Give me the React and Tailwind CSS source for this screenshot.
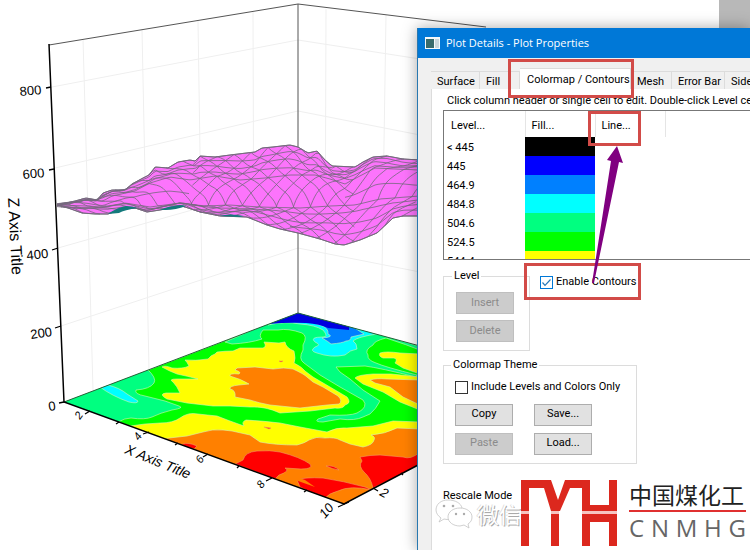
import { useState } from "react";
import clsx from "clsx";

const tabs = [
  { name: "Surface", width: "w-[49px]" },
  { name: "Fill", width: "w-10" },
  { name: "Colormap / Contours", width: "w-[111px]" },
  { name: "Mesh", width: "w-[41px]" },
  { name: "Error Bar", width: "w-[53px]" },
  { name: "Side Walls", width: "w-16" },
];

const levels = [
  { label: "< 445", color: "bg-black" },
  { label: "445", color: "bg-[#0000ff]" },
  { label: "464.9", color: "bg-[#0080ff]" },
  { label: "484.8", color: "bg-[#00ffff]" },
  { label: "504.6", color: "bg-[#00ff80]" },
  { label: "524.5", color: "bg-[#00ff00]" },
  { label: "544.4", color: "bg-[#ffff00]" },
];

// Surface profile, from the far edge down to the near edge
const profiles = [
  [[57, 205], [75, 201], [86, 198], [97, 200], [103, 193], [112, 190], [125, 190], [132, 184], [143, 178], [149, 175], [155, 167], [168, 168], [178, 162], [190, 160], [195, 161], [200, 156], [215, 157], [230, 155], [255, 152], [262, 148], [273, 147], [290, 145], [298, 147], [308, 153], [317, 151], [325, 160], [332, 166], [355, 167], [363, 162], [373, 157], [387, 156], [403, 159], [420, 160]],
  [[57, 205], [86, 200], [103, 201], [112, 196], [135, 191], [150, 183], [170, 177], [190, 180], [215, 176], [240, 180], [265, 178], [290, 175], [315, 175], [330, 179], [345, 184], [358, 177], [375, 168], [395, 169], [420, 170]],
  [[57, 205], [86, 206], [103, 207], [125, 203], [150, 207], [180, 203], [205, 206], [230, 205], [260, 207], [300, 208], [330, 206], [355, 205], [380, 199], [420, 196]],
  [[57, 205], [68, 208], [82, 213], [95, 214], [108, 214], [122, 209], [135, 208], [147, 212], [160, 210], [182, 206], [200, 212], [220, 216], [247, 217], [267, 225], [280, 229], [298, 233], [320, 239], [335, 244], [344, 245], [360, 240], [377, 233], [393, 218], [403, 216], [420, 216]],
];

const heightAt = (points, x) => {
  for (let i = 1; i < points.length; i++) {
    if (x <= points[i][0]) {
      const [x0, y0] = points[i - 1];
      const [x1, y1] = points[i];
      return y0 + ((x - x0) / (x1 - x0)) * (y1 - y0);
    }
  }
  return points[points.length - 1][1];
};

// depth runs from 0 (far edge) to 3 (near edge)
const surfaceAt = (x, depth) => {
  const band = Math.min(2, Math.floor(depth));
  const top = heightAt(profiles[band], x);
  const bottom = heightAt(profiles[band + 1], x);
  const part = depth - band;
  const wave = 1.6 * Math.sin(x / 13 + depth * 4) * Math.sin(part * Math.PI);
  return top + part * (bottom - top) + wave;
};

const toPath = (points) => "M" + points.map((p) => p[0].toFixed(1) + " " + p[1].toFixed(1)).join("L");

const driftAt = (depth) => {
  if (depth < 1) return depth * 34;
  if (depth < 2) return 34 + (depth - 1) * 26 + 4 * Math.sin((depth - 1) * Math.PI);
  return 60 + (depth - 2) * 44;
};

const meshLines = () => {
  const lines = [];
  const rows = [
    { depth: 0, from: 57 },
    { depth: 0.25, from: 57 },
    { depth: 0.5, from: 100 },
    { depth: 0.75, from: 57 },
    { depth: 1, from: 57 },
    { depth: 1.5, from: 57, to: 190 },
    { depth: 1.55, from: 345 },
    { depth: 2, from: 57 },
    { depth: 2.2, from: 57 },
    { depth: 2.5, from: 57 },
    { depth: 2.75, from: 290 },
    { depth: 3, from: 57 },
  ];
  rows.forEach(({ depth, from, to = 420 }) => {
    const row = [];
    for (let x = from; x <= to; x += 3) row.push([x, surfaceAt(x, depth)]);
    lines.push(toPath(row));
  });
  for (let start = -106; start < 540; start += 17) {
    const right = [];
    const left = [];
    for (let depth = 0; depth <= 3.01; depth += 0.1) {
      const d = Math.min(3, depth);
      const xr = start + driftAt(d);
      const xl = start - driftAt(d);
      if (xr >= 57 && xr <= 355) right.push([xr, surfaceAt(xr, d)]);
      if (xl >= 190 && xl <= 420) left.push([xl, surfaceAt(xl, d)]);
    }
    if (right.length > 1) lines.push(toPath(right));
    if (left.length > 1) lines.push(toPath(left));
  }
  return lines.join("");
};

const surfaceOutline = toPath([...profiles[0], ...[...profiles[3]].reverse()]) + "Z";
const surfaceMesh = meshLines();

const Surface = () => (
  <g>
    <path d={surfaceOutline} fill="#fc74fc" stroke="#75707c" strokeWidth="1" strokeLinejoin="round" />
    <path d={surfaceMesh} fill="none" stroke="#75687e" strokeWidth="0.8" />
    <path d="M108 214Q118 207 126 206Q132 206 138 208Q124 210 119 213ZM160 210Q169 206 174 206Q180 204 186 206Q176 210 165 210ZM219 216Q230 213 244 216L240 217Z" fill="#147a7c" />
  </g>
);

const Floor = () => (
  <g clipPath="url(#floor)" stroke="#d5f5b8" strokeWidth="0.6" strokeLinejoin="round">
    <path d="M64 402L298 313L420 346V464L344 504Z" fill="#00ff00" />
    {/* 504.6 */}
    <g fill="#00ff80">
      <path d="M60 402L147 369Q157 378 154 383Q150 389 136 390Q134 394 145 396L165 401L179 406Q185 408 172 410Q160 413 152 417Q145 420 131 418Q125 418 118 422L100 420Z" />
      <path d="M225 342L298 310L425 348V352Q405 344 386 338Q374 341 373 345Q364 350 368 355Q367 360 376 363Q385 367 417 375L416 377Q380 368 365 366L336 367L340 372L350 379L363 390L380 401Q376 409 370 414L363 417Q355 421 340 419L323 422Q314 422 318 419L330 415Q350 416 357 413Q369 407 363 400L340 387L320 375L304 363Q298 359 303 350L303 345Q308 336 302 333Q288 328 278 330L263 330Q258 336 262 339Q250 343 232 344Z" />
    </g>
    {/* 484.8 */}
    <g fill="#00ffff">
      <path d="M100 387L108 385Q120 388 127 394L138 401Q138 404 129 402Q112 396 100 387Z" />
      <path d="M268 325Q285 321 300 324Q315 325 323 330Q329 337 323 337Q309 337 315 342Q322 345 315 347Q309 351 317 353Q331 358 345 355Q350 350 357 349Q357 343 353 341Q357 337 377 334L350 323L298 310Z" />
    </g>
    {/* 464.9 */}
    <path d="M298 318L320 325Q329 328 328 334Q335 337 322 338Q329 342 331 344Q343 343 346 341Q351 341 351 337L364 334L347 323Z" fill="#0080ff" />
    {/* 445 */}
    <path d="M298 310L268 324Q290 322 306 323Q320 324 328 328L349 330V322Z" fill="#0000e0" stroke="none" />
    {/* 544.4 */}
    <g fill="#ffff00">
      <path d="M162 367Q165 365 172 368Q183 369 189 366Q187 362 185 360Q195 361 208 359Q211 355 215 354L217 352Q225 351 233 351L240 348L263 348Q267 347 264 342L279 343L285 342Q286 348 294 351Q296 359 294 363Q302 367 305 371L313 377L330 387L347 397Q352 403 345 405Q343 409 335 408L310 411L280 413Q265 406 250 407L230 406L213 406L187 403L167 399Q158 394 166 393L180 393Q177 386 173 382Q168 379 177 379L198 379Q187 376 177 374Q169 371 162 367Z" />
      <path d="M380 353Q386 351 400 353L420 354V374L403 368L395 363Q398 359 394 358L383 358Q378 356 380 353Z" />
      <path d="M355 378Q357 375 373 374L391 374L420 377V410L400 402L383 392L363 384Z" />
      <path d="M130 426L145 424L160 423Q173 423 180 418Q188 412 198 414Q207 415 217 416L230 421L244 426Q241 422 246 420Q263 421 280 423L300 427L327 432Q337 427 347 428L373 426L393 421L420 422V505H130Z" />
    </g>
    {/* 564.2 */}
    <g fill="#ff8000">
      <path d="M237 368L255 367L273 369Q284 367 293 369Q304 374 307 377L313 382L323 387L338 396Q343 401 339 404L327 405L300 408L270 405Q259 403 250 400L235 397Q236 390 230 389Q229 386 239 385L249 384Q241 379 230 376Q229 373 239 374Q242 372 235 370Z" />
      <path d="M370 380Q376 378 387 379L420 380V405L403 397L390 387L375 383Z" />
      <path d="M160 439L187 436L203 432Q212 429 223 430L232 431L250 435L260 442Q275 445 297 445Q305 443 309 440Q316 436 325 438Q335 437 340 440L350 444L363 447Q373 445 374 440Q376 437 371 435Q385 434 397 428L420 429V470L344 510L160 445Z" />
    </g>
    {/* above 584 */}
    <g fill="#ff0000" stroke="#f0a060">
      <path d="M243 460Q245 452 257 451Q270 450 280 452Q300 457 310 464Q314 469 301 469L285 468Q291 471 279 475L275 479L235 464Z" />
      <path d="M297 480Q304 477 323 478Q343 481 365 487L372 490Q350 485 338 491Q329 493 324 499L300 487Z" />
      <path d="M360 457Q370 455 380 455L403 457Q411 460 420 452V465L373 488Q371 478 364 472Q358 466 362 461Z" />
      <path d="M326 466Q334 465 339 470Q332 469 326 466ZM183 444Q188 442 197 446L194 449L180 446ZM264 427L271 428L269 429ZM279 361L283 361L281 362Z" />
    </g>
    <path d="M284 472L305 480L315 487L284 476Z" fill="#ff8000" stroke="none" />
  </g>
);

const PlotView = () => (
  <svg
    viewBox="0 0 500 550"
    className="absolute left-0 top-0 w-[500px]"
    role="img"
    aria-label="3D surface with contour projection"
  >
    <defs>
      <clipPath id="floor">
        <path d="M64 402L298 313L420 346V464L344 504Z" />
      </clipPath>
    </defs>
    <g stroke="#efefef" strokeWidth="1" fill="none">
      <path d="M83 39L93 390M142 30L149 370M198 21L203 348M253 12L254 330M326 9L325 320M386 15L381 336" />
      <path d="M52 87L298 40L420 59M55 168L298 111L420 135M58 248L298 180L420 203M61 326L298 248L420 272" />
    </g>
    <path d="M49 45L298 4L486 27M298 4V313" fill="none" stroke="#555" strokeWidth="1" />
    <Floor />
    <path d="M64 402L298 313L420 346" fill="none" stroke="#266039" strokeWidth="1" />
    <Surface />
    <path d="M49 44L64 402L344 504L420 464" fill="none" stroke="#000" strokeWidth="1.5" />
    <path
      d="M46 88L51 87M49 170L54 169M52 250L58 248M55 328L61 326M59 403L64 402M90 411L85 414M119 422L116 424M149 432L143 434M178 443L175 445M208 454L203 457M239 466L237 468M272 478L266 481M307 490L304 492M349 502L338 507M373 488L378 491M401 473L403 475"
      stroke="#000"
      strokeWidth="1.3"
    />
    <g className="fill-black font-['Liberation_Sans',sans-serif] text-[13px]">
      <text transform="translate(20 96) rotate(-5)">800</text>
      <text transform="translate(23 179) rotate(-5)">600</text>
      <text transform="translate(27 260) rotate(-6)">400</text>
      <text transform="translate(31 339) rotate(-8)">200</text>
      <text transform="translate(49 411) rotate(-8)">0</text>
      <text transform="translate(8 198) rotate(87)" className="text-[16px]">Z Axis Title</text>
      <text transform="translate(124 453) rotate(22)" className="text-[14px] italic">X Axis Title</text>
      <g className="text-[11px] italic">
        <text transform="translate(80 420) rotate(-55)">2</text>
        <text transform="translate(139 441) rotate(-55)">4</text>
        <text transform="translate(201 464) rotate(-55)">6</text>
        <text transform="translate(262 489) rotate(-55)">8</text>
        <text transform="translate(325 519) rotate(-50)" className="text-[13px]">10</text>
        <text transform="translate(379 495) rotate(28)" className="text-[13px]">2</text>
      </g>
    </g>
  </svg>
);

const DialogButton = ({ children, disabled }) => (
  <button
    type="button"
    disabled={disabled}
    className={clsx(
      "h-[22px] w-[58px] border",
      disabled ? "border-[#bfbfbf] bg-[#cccccc] text-[#8b8b8b]" : "border-[#adadad] bg-[#e1e1e1]"
    )}
  >
    {children}
  </button>
);

const CheckBox = ({ label, checked, onChange, blue }) => (
  <label className="flex items-center gap-[3px] whitespace-nowrap">
    <span className="grid">
      <input
        type="checkbox"
        checked={checked}
        onChange={onChange}
        className={clsx(
          "col-start-1 row-start-1 size-[13px] appearance-none border bg-white",
          blue ? "border-[#0078d7]" : "border-[#333]"
        )}
      />
      {checked && (
        <svg viewBox="0 0 13 13" className="pointer-events-none col-start-1 row-start-1 size-[13px]">
          <path d="M2.5 6.5L5 9.3L10.5 3.5" fill="none" stroke="#2678b8" strokeWidth="1.2" />
        </svg>
      )}
    </span>
    {label}
  </label>
);

const Highlight = ({ className }) => (
  <div className={clsx("pointer-events-none absolute z-10 border-[3px] border-[#d24b48]", className)} />
);

const LevelTable = () => (
  <div className="relative">
    <div className="h-[150px] overflow-hidden border-y border-l border-[#777]">
      <table className="table-fixed border-collapse text-left">
        <thead>
          <tr className="h-[26px]">
            <th className="w-[81px] border-r border-[#e5e5e5] pl-[7px] pt-1 font-normal">Level...</th>
            <th className="w-[70px] border-r border-[#e5e5e5] pl-1.5 pt-1 font-normal">Fill...</th>
            <th className="w-[70px] border-r border-[#e5e5e5] pl-1.5 pt-1 font-normal">Line...</th>
          </tr>
        </thead>
        <tbody className="leading-4">
          {levels.map((level) => (
            <tr key={level.label} className="h-[19px]">
              <td className="pl-[3px] pt-0.5">{level.label}</td>
              <td className={level.color} />
              <td />
            </tr>
          ))}
        </tbody>
      </table>
    </div>
    <Highlight className="left-[145px] top-px h-[35px] w-[53px]" />
    <svg viewBox="0 0 40 140" className="pointer-events-none absolute left-[147px] top-[35px] z-20 w-10">
      <path d="M2 138L21 16L17 15L27 1L33 18L29 17L4 138Z" fill="#800080" />
    </svg>
  </div>
);

const Watermark = () => (
  <div className="absolute bottom-1 left-[17px] z-10 flex items-center" aria-label="微信 中国煤化工 CNMHG">
    <svg viewBox="0 0 38 32" className="mt-1 w-[38px]">
      <g fill="#fff" stroke="#c4c4c4" strokeWidth="0.8">
        <path d="M13 1C6 1 1 5 1 11C1 14 3 17 6 19L4 23L9 20Q12 21 15 20L27 9C26 4 20 1 13 1Z" />
        <path d="M25 9C18 9 13 13 13 18C13 23 18 27 25 27L29 26L34 29L33 25C36 23 37 21 37 18C37 13 32 9 25 9Z" />
      </g>
      <g fill="#aaa">
        <circle cx="9" cy="7" r="1.3" />
        <circle cx="18" cy="7" r="1.3" />
        <circle cx="21" cy="15" r="1.2" />
        <circle cx="29" cy="15" r="1.2" />
      </g>
    </svg>
    <span className="ml-1 whitespace-nowrap font-['Noto_Sans_CJK_SC',sans-serif] text-[22px] leading-6 text-white [text-shadow:1px_1px_0_#aaa,-1px_0_0_#ddd]">
      微信
    </span>
    <svg viewBox="0 0 96 66" className="w-24">
      <g fill="#dc281e">
        <path d="M0 0H30L37 20L44 0H69V25H88V0H96V31H61V8H49L39 31H30L23 8H8V31H0Z" />
        <path d="M0 34H8V66H0ZM30 34H38V66H30ZM61 34H96V66H88V42H69V66H61Z" />
      </g>
      <path d="M0 31H8V34H0ZM30 31H38V34H30ZM61 31H96V34H61Z" fill="#f6c4c0" />
    </svg>
    <div className="ml-3 w-[117px]">
      <div className="whitespace-nowrap font-['Noto_Sans_CJK_SC',sans-serif] text-[23px] leading-7 text-[#222]">
        中国煤化工
      </div>
      <div className="mt-0.5 h-0.5 bg-[#e03030]" />
      <div className="flex justify-between pb-1 pt-0.5 font-['Open_Sans',sans-serif] text-2xl leading-7 text-[#666]">
        {[..."CNMHG"].map((letter) => (
          <span key={letter}>{letter}</span>
        ))}
      </div>
    </div>
  </div>
);

const PlotDetails = () => {
  const [contours, setContours] = useState(true);
  const [levelsOnly, setLevelsOnly] = useState(false);
  const [active, setActive] = useState("Colormap / Contours");

  return (
    <section className="absolute bottom-0 left-[417px] right-0 top-7 flex flex-col overflow-hidden border-l border-[#2878b0] bg-[#f0f0f0] font-[Roboto,sans-serif] text-[11px] text-black">
      <header className="flex h-[30px] shrink-0 items-center gap-1.5 bg-[#0078d7] pl-[7px] text-white">
        <svg viewBox="0 0 15 12" className="w-[15px]">
          <path d="M0 0H15V12H0Z" fill="#f4f8fa" />
          <path d="M1 2H9V11H1Z" fill="#376b6c" />
          <path d="M10 2H14V11H10Z" fill="#c8d6dc" />
        </svg>
        <h1 className="font-['Open_Sans',sans-serif] text-[11px]">Plot Details - Plot Properties</h1>
      </header>

      <div className="flex flex-1 flex-col pl-[13px]">
        <div role="tablist" className="flex h-[31px] shrink-0 items-end whitespace-nowrap">
          {tabs.map((tab) => (
            <button
              key={tab.name}
              type="button"
              role="tab"
              aria-selected={tab.name === active}
              onClick={() => setActive(tab.name)}
              className={clsx(
                "shrink-0 border-r border-t border-[#dcdcdc] pt-0.5 text-left",
                tab.width,
                tab.name === active ? "h-[21px] bg-white pl-[7px]" : "h-[18px] pl-1.5"
              )}
            >
              {tab.name}
            </button>
          ))}
        </div>

        <div className="flex-1 border-l border-[#dcdcdc] bg-white pl-[11px]">
          <p className="h-[21px] whitespace-nowrap pl-1 pt-1 leading-4">
            Click column header or single cell to edit. Double-click Level cell to edit
          </p>
          <LevelTable />

          <div className="flex items-start gap-2.5 pt-2.5">
            <fieldset className="flex w-[87px] flex-col gap-1.5 border border-[#dcdcdc] pb-2 pl-3 pt-2.5">
              <legend className="-ml-1 px-0.5 leading-3">Level</legend>
              <DialogButton disabled>Insert</DialogButton>
              <DialogButton disabled>Delete</DialogButton>
            </fieldset>
            <div className="pt-1">
              <CheckBox blue label="Enable Contours" checked={contours} onChange={() => setContours(!contours)} />
            </div>
          </div>

          <fieldset className="mt-2 w-[194px] border border-[#dcdcdc] pb-2 pl-[11px] pt-2">
            <legend className="-ml-1 px-0.5 leading-3">Colormap Theme</legend>
            <CheckBox label="Include Levels and Colors Only" checked={levelsOnly} onChange={() => setLevelsOnly(!levelsOnly)} />
            <div className="grid grid-cols-[58px_58px] gap-x-[21px] gap-y-[7px] pt-2">
              <DialogButton>Copy</DialogButton>
              <DialogButton>Save...</DialogButton>
              <DialogButton disabled>Paste</DialogButton>
              <DialogButton>Load...</DialogButton>
            </div>
          </fieldset>

          <p className="pt-6 leading-4">Rescale Mode</p>
        </div>
      </div>

      <Highlight className="left-[90px] top-[31px] h-[39px] w-[126px]" />
      <Highlight className="left-[106px] top-[235px] h-[37px] w-[117px]" />
      <Watermark />
    </section>
  );
};

const App = () => (
  <main className="relative min-h-screen w-full overflow-hidden bg-white">
    <div className="absolute right-0 top-0 h-7 w-[31px] bg-[#b8b8b8]" />
    <PlotView />
    <div className="absolute bottom-0 left-[417px] right-0 top-7 shadow-[0_0_14px_rgba(0,0,0,0.35)]" />
    <PlotDetails />
  </main>
);

export default App;
